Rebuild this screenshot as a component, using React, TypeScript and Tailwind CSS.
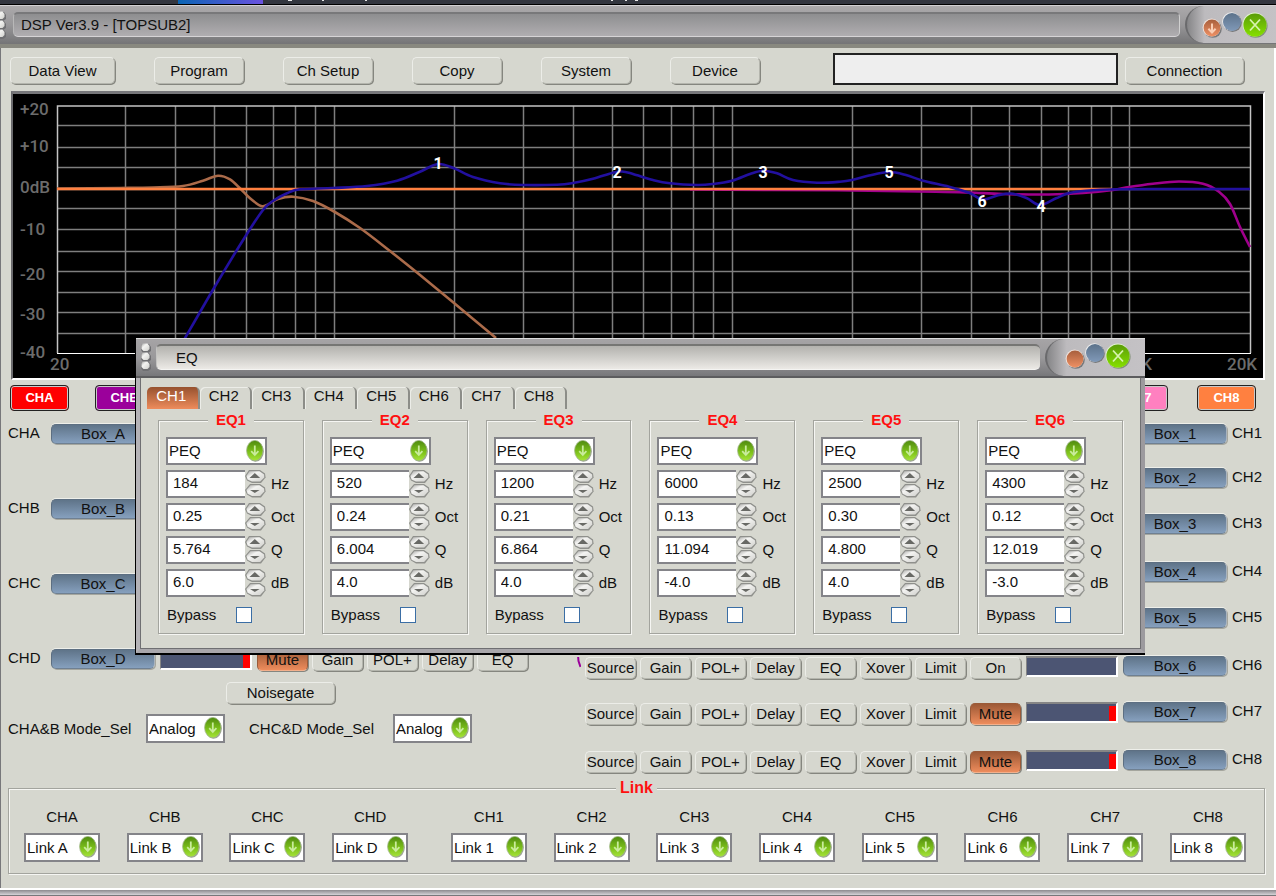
import { useState, type ReactNode } from "react";
import clsx from "clsx";

type Point = [number, number];

const menu = [
  { label: "Data View", width: "w-[105px]" },
  { label: "Program", width: "w-[90px]" },
  { label: "Ch Setup", width: "w-[90px]" },
  { label: "Copy", width: "w-[90px]" },
  { label: "System", width: "w-[90px]" },
  { label: "Device", width: "w-[90px]" }
];

const gridX = [
  125, 175, 214, 246, 273, 295, 315, 334, 454, 523, 573, 612, 643, 671, 693, 713, 732, 852, 921, 971, 1009, 1041, 1068,
  1091, 1111, 1129
];
const gridY = [125, 147, 167, 189, 208, 229, 251, 271, 292, 312, 333];

const levels = [
  { text: "+20", y: 115 },
  { text: "+10", y: 152 },
  { text: "0dB", y: 193 },
  { text: "-10", y: 235 },
  { text: "-20", y: 280 },
  { text: "-30", y: 320 },
  { text: "-40", y: 358 }
];

const markers = [
  { text: "1", x: 438, y: 169 },
  { text: "2", x: 617, y: 178 },
  { text: "3", x: 763, y: 178 },
  { text: "5", x: 889, y: 178 },
  { text: "6", x: 982, y: 207 },
  { text: "4", x: 1041, y: 212 }
];

const subCurve: Point[] = [
  [57, 188.5], [120, 188], [153, 187.5], [183, 186], [203, 180.7], [218, 175.7], [230, 179.3], [240, 188.3], [250, 198.3],
  [261, 206], [267, 205], [278, 199], [293, 196.7], [313, 201], [334, 211.5], [360, 228], [390, 251], [420, 275], [454, 303],
  [496, 338]
];

const ch1Curve: Point[] = [
  [184, 340], [214, 288], [245, 237], [263, 210], [273, 201], [287, 193.3], [300, 189.3], [333, 188], [367, 186],
  [397, 180.7], [420, 171.7], [438, 164], [454, 168.3], [473, 177], [500, 183.3], [523, 185], [557, 184.7], [573, 183],
  [593, 178.7], [612, 173], [622, 171.5], [633, 174], [653, 180], [670, 183.3], [697, 185], [713, 184], [732, 180.7],
  [750, 174], [763, 170.7], [777, 173.3], [793, 180], [817, 182.7], [840, 181.7], [852, 180], [869, 175.5], [889, 172],
  [906, 175], [923, 180.7], [949, 186.7], [969, 192.7], [983, 199.5], [999, 195], [1013, 193.7], [1027, 198.3],
  [1040, 205], [1056, 198.3], [1069, 193], [1086, 190.7], [1119, 189.3], [1160, 189], [1250, 189]
];

const topCurve: Point[] = [
  [690, 189.5], [836, 190.3], [936, 191.7], [969, 192.5], [1003, 194], [1049, 194.5], [1083, 193], [1113, 190],
  [1129, 187], [1153, 183.7], [1179, 181.5], [1203, 183.7], [1219, 191.7], [1230, 204], [1240, 227], [1250, 247]
];

const inputChannels = ["A", "B", "C"];

const outputChannels = [
  { id: 1, space: "mt-0" },
  { id: 2, space: "mt-6" },
  { id: 3, space: "mt-[26px]" },
  { id: 4, space: "mt-7" },
  { id: 5, space: "mt-[26px]" },
  { id: 6, space: "mt-7", state: "On" },
  { id: 7, space: "mt-[26px]", state: "Mute" },
  { id: 8, space: "mt-7", state: "Mute" }
];

const eqBands = [
  { name: "EQ1", hz: "184", oct: "0.25", q: "5.764", db: "6.0" },
  { name: "EQ2", hz: "520", oct: "0.24", q: "6.004", db: "4.0" },
  { name: "EQ3", hz: "1200", oct: "0.21", q: "6.864", db: "4.0" },
  { name: "EQ4", hz: "6000", oct: "0.13", q: "11.094", db: "-4.0" },
  { name: "EQ5", hz: "2500", oct: "0.30", q: "4.800", db: "4.0" },
  { name: "EQ6", hz: "4300", oct: "0.12", q: "12.019", db: "-3.0" }
];

const links = ["A", "B", "C", "D", "1", "2", "3", "4", "5", "6", "7", "8"];
const eqTabs = ["CH1", "CH2", "CH3", "CH4", "CH5", "CH6", "CH7", "CH8"];

// Catmull-Rom spline through the points, written as cubic beziers
function smooth(points: Point[]) {
  let d = `M${points[0][0]} ${points[0][1]}`;
  for (let i = 0; i < points.length - 1; i++) {
    const p0 = points[Math.max(i - 1, 0)];
    const p1 = points[i];
    const p2 = points[i + 1];
    const p3 = points[Math.min(i + 2, points.length - 1)];
    d += ` C${p1[0] + (p2[0] - p0[0]) / 6} ${p1[1] + (p2[1] - p0[1]) / 6} ${p2[0] - (p3[0] - p1[0]) / 6} ${p2[1] - (p3[1] - p1[1]) / 6} ${p2[0]} ${p2[1]}`;
  }
  return d;
}

function Button({ children, className, active }: { children: ReactNode; className?: string; active?: boolean }) {
  return (
    <button
      type="button"
      className={clsx(
        "flex items-center justify-center rounded-[5px] border whitespace-nowrap shadow-[1px_1px_0_#85867f]",
        active
          ? "border-[#9a5a38] border-b-[#f3b08c] bg-linear-to-b from-[#9d5936] to-[#ee8c5c]"
          : "border-[#ecede8] border-r-[#b4b5ad] border-b-[#b4b5ad] bg-[#d6d7cf]",
        className
      )}
    >
      {children}
    </button>
  );
}

function BoxButton({ children }: { children: ReactNode }) {
  return (
    <button
      type="button"
      className="flex h-5 w-[104px] shrink-0 items-center justify-center rounded-[5px] border border-[#5d6f82] border-r-[#a9b3bd] border-b-[#6f8092] bg-linear-to-b from-[#5f7489] to-[#86a0be] shadow-[1px_1px_0_#a5a69e,0_-1px_0_#eeefea]"
    >
      {children}
    </button>
  );
}

function Meter({ clip }: { clip?: boolean }) {
  return (
    <div className="flex h-[21px] w-[92px] shrink-0 items-end justify-end border-t-2 border-r-2 border-b-2 border-l border-t-[#858585] border-r-white border-b-white border-l-[#858585] bg-[#4c5573]">
      {clip && <div className="h-[15px] w-[7px] bg-[#ff0000]" />}
    </div>
  );
}

function Select({ label, value, className }: { label: string; value: string; className?: string }) {
  return (
    <div className={clsx("relative border-2 border-[#848489] bg-white", className)}>
      <select aria-label={label} className="h-full w-full appearance-none bg-transparent pl-px outline-none">
        <option>{value}</option>
      </select>
      <svg viewBox="0 0 18 22" className="pointer-events-none absolute top-px right-px h-[22px] w-[18px]">
        <ellipse cx="9.6" cy="11.6" rx="8.2" ry="10.2" fill="#9da295" />
        <ellipse cx="8.8" cy="10.6" rx="8.2" ry="10.2" fill="url(#green)" stroke="#9fb588" strokeWidth="0.8" />
        <path d="M8.8 5.5v9M5.2 11.2l3.6 3.8 3.6-3.8" fill="none" stroke="#c9ec9c" strokeWidth="1.8" />
      </svg>
    </div>
  );
}

function Spinner({ label }: { label: string }) {
  return (
    <div className="flex h-7 w-[21px] flex-col">
      <button type="button" aria-label={`${label} up`} className="h-3.5">
        <svg viewBox="0 0 21 14" className="h-3.5 w-[21px]">
          <path d="M4 0h11l5 3.5.6 4L16 13H7l-5-2.5L0 6z" fill="#8f908c" />
          <path d="M4.5 1.2h10l4.6 3.2.2 3-4.2 4H7L2.6 9.6 1.4 6z" fill="url(#knob)" />
          <path d="M4.5 8L9.8 3l5.3 5z" fill="#686965" />
        </svg>
      </button>
      <button type="button" aria-label={`${label} down`} className="h-3.5">
        <svg viewBox="0 0 21 14" className="h-3.5 w-[21px]">
          <path d="M5 0h10l5 3.5.6 4-4.6 6H7l-5-3L0 6z" fill="#8f908c" />
          <path d="M5.5 1.2h9l4.6 3.2.2 3-4.2 4.6H7L2.6 9.8 1.4 6z" fill="url(#knob)" />
          <path d="M5 6h9.6L9.8 9z" fill="#686965" />
        </svg>
      </button>
    </div>
  );
}

function Field({ name, value, unit }: { name: string; value: string; unit: string }) {
  return (
    <div className="flex h-7">
      <input
        aria-label={`${name} ${unit}`}
        defaultValue={value}
        className="w-[79px] border-2 border-r-0 border-[#848489] bg-white pb-0.5 pl-[5px] outline-none"
      />
      <Spinner label={`${name} ${unit}`} />
      <span className="self-center pl-[5px]">{unit}</span>
    </div>
  );
}

function Grip({ className }: { className?: string }) {
  return (
    <svg viewBox="0 0 12 28" className={clsx("h-7 w-3 shrink-0", className)}>
      {[0, 9, 18].map((y) => (
        <g key={y}>
          <path d={`M2 ${y + 1}h7l2 3v4l-3 2H3L1 ${y + 7}z`} fill="#6f6f72" />
          <path d={`M2.5 ${y + 0.5}h5l2 2.5v3l-2 2h-4l-2-2V${y + 3}z`} fill="url(#knob)" />
        </g>
      ))}
    </svg>
  );
}

function WindowControls({ arrow }: { arrow?: boolean }) {
  return (
    <div className="flex h-[26px]">
      <button type="button" aria-label="Minimize" className="self-end">
        <svg viewBox="0 0 20 20" className="size-5">
          <circle cx="10.8" cy="10.8" r="9" fill="#77787a" />
          <circle cx="9.6" cy="9.6" r="9" fill="#efe3dc" />
          <circle cx="10" cy="10" r="8.4" fill="url(#orange)" />
          {arrow && <path d="M10 5.5v9M6.4 10.8l3.6 3.8 3.6-3.8" fill="none" stroke="#f9cdb4" strokeWidth="2" />}
        </svg>
      </button>
      <button type="button" aria-label="Maximize" className="self-start">
        <svg viewBox="0 0 20 20" className="size-5">
          <circle cx="10.6" cy="10.8" r="9.2" fill="#77787a" />
          <circle cx="9.4" cy="9.4" r="9.2" fill="#eeeeee" />
          <circle cx="10" cy="10" r="9" fill="url(#blue)" />
        </svg>
      </button>
      <button type="button" aria-label="Close" className="self-center">
        <svg viewBox="0 0 26 26" className="size-[26px]">
          <circle cx="13.6" cy="13.8" r="12" fill="#83907a" />
          <circle cx="12.6" cy="12.6" r="12" fill="#e2f3cf" />
          <circle cx="13" cy="13" r="11.6" fill="url(#lime)" />
          <path d="M8 7.5l10 11M18 7.5L8 18.5" fill="none" stroke="#d7f3ae" strokeWidth="1.8" />
        </svg>
      </button>
    </div>
  );
}

function Response() {
  return (
    <svg viewBox="13 94 1250 284" className="block h-auto w-full bg-black" fontFamily="Roboto, sans-serif">
      <g stroke="#7e7e7e" strokeWidth="1.5">
        {gridX.map((x) => (
          <line key={x} x1={x + 0.5} x2={x + 0.5} y1="106" y2="353" />
        ))}
        {gridY.map((y) => (
          <line key={y} x1="57" x2="1251" y1={y + 0.5} y2={y + 0.5} />
        ))}
      </g>
      <path d="M57.5 353V106H1250.5V353" fill="none" stroke="#c4c4c4" strokeWidth="1.5" />
      <path d="M57 353.5H1251" stroke="#ffffff" />
      <g fontSize="17" fontWeight="500" fill="#6c6c6c">
        {levels.map((level) => (
          <text key={level.text} x="20" y={level.y}>
            {level.text}
          </text>
        ))}
        <text x="50" y="370">20</text>
        <text x="1122" y="370">10K</text>
        <text x="1227" y="370">20K</text>
      </g>
      <g fill="none" strokeWidth="2.6">
        <path d={smooth(subCurve)} stroke="#ab6b4a" />
        <path d={smooth(topCurve)} stroke="#a0008c" />
        <path d="M57 189H1112" stroke="#ff8040" strokeWidth="2.4" />
        <path d={smooth(ch1Curve)} stroke="#22109f" />
      </g>
      <g fontSize="16" fontWeight="700" fill="#ffffff" textAnchor="middle">
        {markers.map((marker) => (
          <text key={marker.text} x={marker.x} y={marker.y}>
            {marker.text}
          </text>
        ))}
      </g>
    </svg>
  );
}

function Tag({ children, color }: { children: ReactNode; color: string }) {
  return (
    <button
      type="button"
      className={clsx(
        "h-[26px] w-[59px] rounded-[4px] border border-[#222] text-[13px] font-bold text-white shadow-[inset_0_0_0_1px_#c9c9c9]",
        color
      )}
    >
      {children}
    </button>
  );
}

function EqDialog() {
  const [tab, setTab] = useState("CH1");

  return (
    <section
      role="dialog"
      aria-label="EQ"
      className="absolute top-[338px] right-[131px] left-[135px] border-b-2 border-l border-black bg-[#d6d7cf]"
    >
      <header className="flex h-10 border-t border-b-2 border-t-[#dcdcdc] border-b-[#5c5c5e] bg-linear-to-b from-[#a6a4a6] via-[#9a999b] to-[#77777a]">
        <Grip className="mt-1 ml-1" />
        <div className="mt-[5px] ml-1 flex h-[26px] flex-1 items-center rounded-[5px] border-t-2 border-b border-l border-t-[#767674] border-b-[#f4f4f2] border-l-[#c4c4c2] bg-linear-to-b from-[#b3b2ae] to-[#eceae6] pl-[19px]">
          EQ
        </div>
        <div className="ml-[5px] flex h-[37px] w-[100px] items-center justify-end rounded-l-full border-l-2 border-l-[#6a6a6c] bg-linear-to-r from-[#858587] via-[#bdbbbe] via-20% to-[#c4c2c5] pr-3.5 pb-1">
          <WindowControls />
        </div>
      </header>
      <div className="border-r-4 border-b-4 border-l-4 border-r-[#9c9a9e] border-b-[#a9a7ab] border-l-[#b5b3b7] pt-[9px] pr-[18px] pb-[15px] pl-px shadow-[inset_1px_-1px_0_#6f6f72,inset_-1px_0_0_#6f6f72]">
        <div role="tablist" className="ml-1.5 grid h-[21px] w-[420px] grid-cols-8">
          {eqTabs.map((name) => (
            <button
              key={name}
              type="button"
              role="tab"
              aria-selected={tab === name}
              onClick={() => setTab(name)}
              className={clsx(
                "rounded-t-[5px] border-r-2 border-r-[#8c8d88] pr-0.5 pb-1",
                tab === name
                  ? "bg-linear-to-b from-[#97522f] to-[#ee8c5c] text-white"
                  : "shadow-[inset_1px_1px_0_#ecede8]"
              )}
            >
              {name}
            </button>
          ))}
        </div>
        <div className="mt-[3px] ml-[17px] grid grid-cols-6 gap-[18px]">
          {eqBands.map((band) => (
            <fieldset
              key={band.name}
              className="min-w-0 border border-[#a3a49e] px-[7px] pb-[9px] shadow-[inset_1px_1px_0_#f6f6f3,1px_1px_0_#f6f6f3]"
            >
              <legend className="mx-auto bg-[#d6d7cf] px-2 font-bold text-[#ff1010]">{band.name}</legend>
              <div className="mt-2 flex flex-col gap-[5px]">
                <Select label={`${band.name} type`} value="PEQ" className="h-7 w-[101px]" />
                <Field name={band.name} value={band.hz} unit="Hz" />
                <Field name={band.name} value={band.oct} unit="Oct" />
                <Field name={band.name} value={band.q} unit="Q" />
                <Field name={band.name} value={band.db} unit="dB" />
              </div>
              <label className="mt-[9px] flex h-[18px] items-center">
                <span className="w-[70px] pl-px">Bypass</span>
                <input type="checkbox" className="size-4 appearance-none border border-[#3b6ea5] bg-white" />
              </label>
            </fieldset>
          ))}
        </div>
      </div>
    </section>
  );
}

export default function App() {
  return (
    <div className="relative flex min-h-screen flex-col bg-[#d6d7cf] font-['Liberation_Sans',Arial,sans-serif] text-[15px] leading-[18px] text-[#111111]">
      <svg className="absolute size-0" aria-hidden="true">
        <defs>
          <linearGradient id="green" x1="0" y1="0" x2="0" y2="1">
            <stop offset="0" stopColor="#4f8a10" />
            <stop offset="0.6" stopColor="#7fc31c" />
            <stop offset="1" stopColor="#a6e43a" />
          </linearGradient>
          <linearGradient id="lime" x1="0" y1="0" x2="0" y2="1">
            <stop offset="0" stopColor="#5a9c08" />
            <stop offset="1" stopColor="#86e000" />
          </linearGradient>
          <linearGradient id="orange" x1="0" y1="0" x2="0" y2="1">
            <stop offset="0" stopColor="#a85f3c" />
            <stop offset="1" stopColor="#ee9064" />
          </linearGradient>
          <linearGradient id="blue" x1="0" y1="0" x2="0" y2="1">
            <stop offset="0" stopColor="#5c728a" />
            <stop offset="1" stopColor="#8099b8" />
          </linearGradient>
          <linearGradient id="knob" x1="0" y1="0" x2="1" y2="1">
            <stop offset="0" stopColor="#a8a8a6" />
            <stop offset="0.35" stopColor="#f4f4f2" />
            <stop offset="1" stopColor="#d0d0cc" />
          </linearGradient>
        </defs>
      </svg>

      <div className="h-[5px] border-b border-black bg-[#33363f]">
        <svg viewBox="0 0 1276 4" className="block h-1 w-full" preserveAspectRatio="xMinYMin slice">
          <linearGradient id="tab">
            <stop offset="0" stopColor="#0a64b4" />
            <stop offset="1" stopColor="#6a52e0" />
          </linearGradient>
          <rect x="178" width="85" height="4" fill="url(#tab)" />
          <path d="M288 0h4M322 0h2M365 0h2M611 0h2M625 0h2M635 0h3" stroke="#e8e8e8" strokeWidth="2" />
        </svg>
      </div>

      <header className="flex h-[43px] border-t border-b-4 border-t-[#d2d0d3] border-b-[#88887f] bg-linear-to-b from-[#aba9ab] via-[#989799] to-[#747476]">
        <Grip className="mt-[5px] -ml-[5px]" />
        <div className="mt-[6px] ml-1.5 flex h-[25px] flex-1 items-center rounded-[5px] border-t-2 border-r border-b border-l border-t-[#78787a] border-r-[#d0d0d0] border-b-[#d6d4d6] border-l-[#b8b8b8] bg-linear-to-b from-[#8e8e90] to-[#b0aeb1] pl-[7px]">
          DSP Ver3.9 - [TOPSUB2]
        </div>
        <div className="ml-[5px] flex h-[37px] w-[91px] items-center justify-end rounded-l-full border-l-2 border-l-[#6a6a6c] bg-linear-to-r from-[#858587] via-[#bdbbbe] via-20% to-[#c4c2c5] pr-2">
          <WindowControls arrow />
        </div>
      </header>

      <main className="flex-1 border-r-2 border-l border-r-white border-l-[#77777a]">
        <nav className="flex items-end gap-[39px] pt-[5px] pr-[30px] pl-[9px]">
          {menu.map((item) => (
            <Button key={item.label} className={clsx("mb-px h-[27px]", item.width)}>
              {item.label}
            </Button>
          ))}
          <div className="ml-auto flex items-end gap-[7px]">
            <input aria-label="Status" className="h-8 w-[285px] border-2 border-[#222] bg-[#eeeeee] px-2 outline-none" />
            <Button className="mb-px h-[27px] w-[119px]">Connection</Button>
          </div>
        </nav>

        <div className="mt-1.5 mr-[9px] ml-[10px] border-t-[3px] border-r-2 border-b-2 border-l-2 border-t-[#77777a] border-r-white border-b-white border-l-[#6b6b6e]">
          <Response />
        </div>

        <div className="mt-[5px] flex justify-between pr-[18px] pl-[9px]">
          <div className="flex gap-[26px]">
            <Tag color="bg-[#ff0000]">CHA</Tag>
            <Tag color="bg-[#9b009b]">CHB</Tag>
          </div>
          <div className="flex gap-[29px]">
            <Tag color="bg-[#ff80c0]">CH7</Tag>
            <Tag color="bg-[#ff8040]">CH8</Tag>
          </div>
        </div>

        <div className="mt-[13px] flex justify-between pr-[11px] pl-[7px]">
          <div>
            <div className="flex flex-col gap-[55px]">
              {inputChannels.map((id) => (
                <div key={id} className="flex h-5">
                  <span className="w-[43px]">CH{id}</span>
                  <BoxButton>Box_{id}</BoxButton>
                </div>
              ))}
              <div className="flex h-5 items-start gap-[5px]">
                <div className="flex">
                  <span className="w-[43px]">CHD</span>
                  <BoxButton>Box_D</BoxButton>
                </div>
                <Meter clip />
                <div className="flex gap-1">
                  <Button active className="h-[22px] w-[51px]">Mute</Button>
                  <Button className="h-[22px] w-[51px]">Gain</Button>
                  <Button className="h-[22px] w-[51px]">POL+</Button>
                  <Button className="h-[22px] w-[51px]">Delay</Button>
                  <Button className="h-[22px] w-[51px]">EQ</Button>
                </div>
              </div>
            </div>
            <Button className="mt-[13px] ml-[218px] h-[22px] w-[109px]">Noisegate</Button>
            <div className="mt-2.5 flex items-center">
              <span className="w-[138px]">CHA&amp;B Mode_Sel</span>
              <Select label="CHA&B Mode_Sel" value="Analog" className="h-[29px] w-[79px]" />
              <span className="ml-6 w-36">CHC&amp;D Mode_Sel</span>
              <Select label="CHC&D Mode_Sel" value="Analog" className="h-[29px] w-[79px]" />
            </div>
          </div>

          <div>
            {outputChannels.map((channel) => (
              <div key={channel.id} className={clsx("flex h-5 items-start justify-end gap-[5px]", channel.space)}>
                {channel.state && (
                  <>
                    <div className="mt-px flex gap-1">
                      {channel.id === 6 && (
                        <svg viewBox="0 0 5 12" className="h-3 w-[5px]">
                          <path d="M2 -2l0.5 6 2 6" fill="none" stroke="#9b009b" strokeWidth="2" />
                        </svg>
                      )}
                      <Button className="h-[22px] w-[51px]">Source</Button>
                      <Button className="h-[22px] w-[51px]">Gain</Button>
                      <Button className="h-[22px] w-[51px]">POL+</Button>
                      <Button className="h-[22px] w-[51px]">Delay</Button>
                      <Button className="h-[22px] w-[51px]">EQ</Button>
                      <Button className="h-[22px] w-[51px]">Xover</Button>
                      <Button className="h-[22px] w-[51px]">Limit</Button>
                      <Button active={channel.state === "Mute"} className="h-[22px] w-[51px]">{channel.state}</Button>
                    </div>
                    <Meter clip={channel.state === "Mute"} />
                  </>
                )}
                <BoxButton>Box_{channel.id}</BoxButton>
                <span className="w-[31px] whitespace-nowrap">CH{channel.id}</span>
              </div>
            ))}
          </div>
        </div>

        <fieldset className="mt-[9px] mr-[9px] ml-[7px] border border-[#a3a49e] px-[15px] pb-[11px] shadow-[inset_1px_1px_0_#f6f6f3,1px_1px_0_#f6f6f3]">
          <legend className="mx-auto bg-[#d6d7cf] px-1 text-[16px] font-bold text-[#ff1010]">Link</legend>
          <div className="flex justify-between pt-[11px] pr-[3px]">
            {links.map((id) => (
              <div key={id} className={clsx("text-center", id === "1" && "ml-4")}>
                <div>CH{id}</div>
                <Select label={`CH${id} link`} value={`Link ${id}`} className="mt-[7px] h-[29px] w-[76px]" />
              </div>
            ))}
          </div>
        </fieldset>
      </main>

      <footer className="h-2 border-t-2 border-b border-t-white border-b-[#77777a] bg-linear-to-b from-[#8c8a8e] to-[#d6d4d8]" />

      <EqDialog />
    </div>
  );
}
